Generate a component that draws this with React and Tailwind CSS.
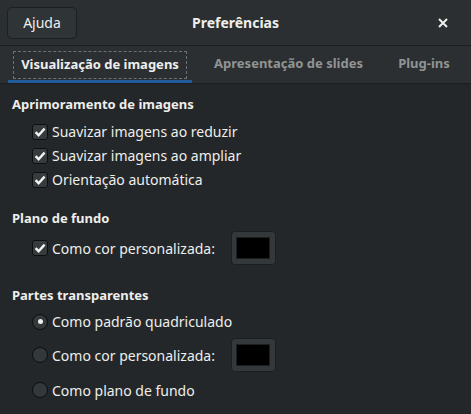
import React from 'react';

const font = { fontFamily: '"Noto Sans", "DejaVu Sans", sans-serif' };

const Check = () => (
  <span className="flex h-[16px] w-[16px] items-center justify-center rounded-[3px] border border-[#0c0e0f] bg-[#363b3e]">
    <svg width="12" height="12" viewBox="0 0 12 12">
      <path d="M1.6 6.2 L4.6 9.2 L10.6 2.6" fill="none" stroke="#f2f2f0" strokeWidth="2.4" />
    </svg>
  </span>
);

const Radio = ({ on }) => (
  <span className="flex h-[16px] w-[16px] items-center justify-center rounded-full border border-[#0c0e0f] bg-[#33383a]">
    {on && <span className="h-[5px] w-[5px] rounded-full bg-[#eeeeec]" />}
  </span>
);

const Swatch = () => (
  <span className="flex h-[34px] w-[45px] items-center justify-center rounded-[4px] border border-[#1b1f20] bg-[#33393b]">
    <span className="h-[22px] w-[34px] border border-[#1b1f20] bg-black" />
  </span>
);

const Row = ({ icon, label, swatch, h }) => (
  <div className={`flex items-center pl-[32px] ${h}`}>
    {icon}
    <span className="ml-[4px] text-[14px] text-[#eeeeec]">{label}</span>
    {swatch && <span className="ml-[16px]"><Swatch /></span>}
  </div>
);

export default function App() {
  return (
    <div style={font} className="h-[414px] w-[471px] overflow-hidden bg-[#232729] text-[#eeeeec]">
      <div className="flex h-[46px] items-center border-b border-[#1b1f20] bg-[#2b2f31] px-[7px]">
        <button className="h-[32px] w-[70px] rounded-[5px] border border-[#1b1f20] bg-[#2f3436] text-[14px] text-[#eeeeec]">Ajuda</button>
        <div className="flex-1 text-center text-[14px] font-bold">Preferências</div>
        <div className="flex w-[70px] justify-end pr-[16px]">
          <svg width="10" height="10" viewBox="0 0 10 10">
            <path d="M1 1 L9 9 M9 1 L1 9" stroke="#eeeeec" strokeWidth="2" />
          </svg>
        </div>
      </div>
      <div className="flex h-[38px] border-b border-[#1b1f20] bg-[#2b2f31] px-[8px] text-[13px] font-bold">
        <div className="flex w-[184px] flex-col">
          <div className="mx-[5px] mt-[5px] flex flex-1 items-center justify-center border border-dashed border-[#6e7274] text-[#eeeeec]">
            Visualização de imagens
          </div>
          <div className="mt-[1px] h-[3px] bg-[#215d9c]" />
        </div>
        <div className="flex flex-1 items-center justify-center pb-[2px] text-[#919494]">Apresentação de slides</div>
        <div className="flex w-[78px] items-center justify-center pb-[2px] text-[#919494]">Plug-ins</div>
      </div>

      <div className="px-[12px] pt-[11px] text-[13px] font-bold">Aprimoramento de imagens</div>
      <div className="mt-[5px]">
        <Row icon={<Check />} label="Suavizar imagens ao reduzir" h="h-[24px]" />
        <Row icon={<Check />} label="Suavizar imagens ao ampliar" h="h-[24px]" />
        <Row icon={<Check />} label="Orientação automática" h="h-[24px]" />
      </div>

      <div className="px-[12px] pt-[17px] text-[13px] font-bold">Plano de fundo</div>
      <div className="mt-[3px]">
        <Row icon={<Check />} label="Como cor personalizada:" swatch h="h-[34px]" />
      </div>

      <div className="px-[12px] pt-[21px] text-[13px] font-bold">Partes transparentes</div>
      <div className="mt-[2px]">
        <Row icon={<Radio on />} label="Como padrão quadriculado" h="h-[28px]" />
        <Row icon={<Radio />} label="Como cor personalizada:" swatch h="h-[39px]" />
        <Row icon={<Radio />} label="Como plano de fundo" h="h-[31px]" />
      </div>
    </div>
  );
}
